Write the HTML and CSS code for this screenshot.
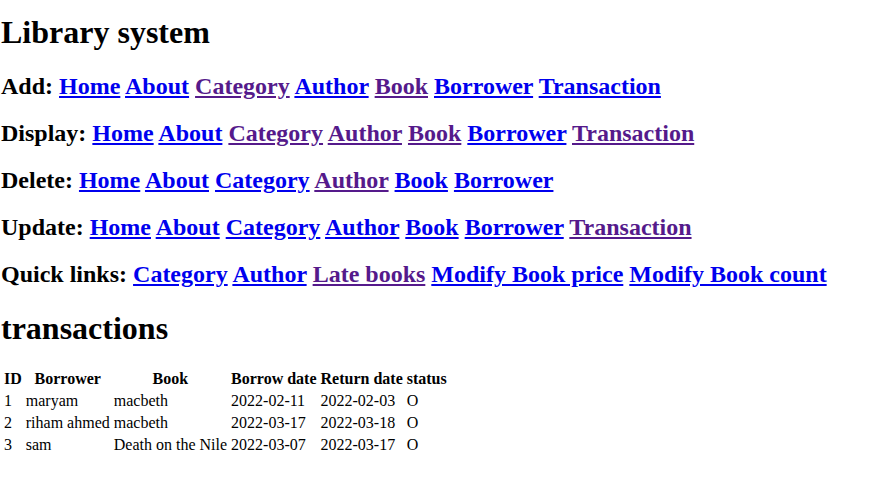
FILE: index.html
```html
<!DOCTYPE html>
<html>
<head>
<meta charset="utf-8">
<title>Library system</title>
<link rel="stylesheet" href="styles.css">
</head>
<body>
<h1 class="title">Library system</h1>
<h2>Add: <a href="#">Home</a> <a href="#">About</a> <a class="v" href="#">Category</a> <a href="#">Author</a> <a class="v" href="#">Book</a> <a href="#">Borrower</a> <a href="#">Transaction</a></h2>
<h2>Display: <a href="#">Home</a> <a href="#">About</a> <a class="v" href="#">Category</a> <a class="v" href="#">Author</a> <a class="v" href="#">Book</a> <a href="#">Borrower</a> <a class="v" href="#">Transaction</a></h2>
<h2>Delete: <a href="#">Home</a> <a href="#">About</a> <a href="#">Category</a> <a class="v" href="#">Author</a> <a href="#">Book</a> <a href="#">Borrower</a></h2>
<h2>Update: <a href="#">Home</a> <a href="#">About</a> <a href="#">Category</a> <a href="#">Author</a> <a href="#">Book</a> <a href="#">Borrower</a> <a class="v" href="#">Transaction</a></h2>
<h2>Quick links: <a href="#">Category</a> <a href="#">Author</a> <a class="v" href="#">Late books</a> <a href="#">Modify Book price</a> <a href="#">Modify Book count</a></h2>
<h1 class="section">transactions</h1>
<table class="tx">
<tr><th>ID</th><th>Borrower</th><th>Book</th><th>Borrow date</th><th>Return date</th><th>status</th></tr>
<tr><td>1</td><td>maryam</td><td>macbeth</td><td>2022-02-11</td><td>2022-02-03</td><td>O</td></tr>
<tr><td>2</td><td>riham ahmed</td><td>macbeth</td><td>2022-03-17</td><td>2022-03-18</td><td>O</td></tr>
<tr><td>3</td><td>sam</td><td>Death on the Nile</td><td>2022-03-07</td><td>2022-03-17</td><td>O</td></tr>
</table>
</body>
</html>
```
FILE: styles.css
```css
html, body {
  margin: 0;
  padding: 0;
  background: #fff;
  color: #000;
  font-family: "Liberation Serif", "Times New Roman", serif;
  font-size: 16px;
}
body {
  padding-left: 1px;
}
h1 {
  font-size: 32px;
  font-weight: bold;
  margin: 21.44px 0;
}
h1.title {
  margin-top: 14px;
  margin-bottom: 22.44px;
}
h1.section {
  margin-bottom: 20.44px;
}
h2 {
  font-size: 24px;
  font-weight: bold;
  margin: 19.92px 0;
}
a {
  color: #0000ee;
  text-decoration: underline;
}
a.v {
  color: #551a8b;
}
.tx {
  border-collapse: separate;
  border-spacing: 2px;
}
.tx th, .tx td {
  padding: 1px;
  text-align: left;
}
.tx th {
  text-align: center;
  font-weight: bold;
}
```
